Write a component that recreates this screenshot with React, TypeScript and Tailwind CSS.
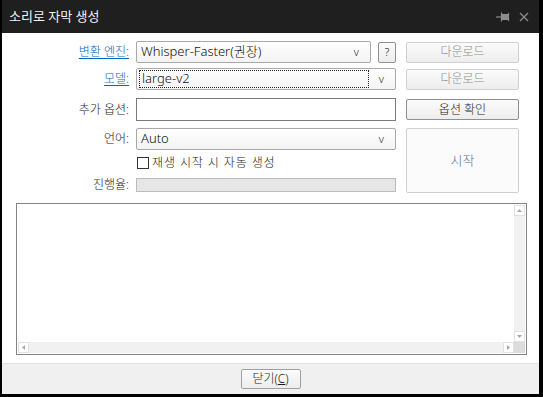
const font = "font-['Noto_Sans','Noto_Sans_CJK_KR',sans-serif] font-light";

function Btn({
  children,
  disabled,
  className = "",
}: {
  children: React.ReactNode;
  disabled?: boolean;
  className?: string;
}) {
  return (
    <button
      className={`flex items-center justify-center rounded-[2px] border bg-gradient-to-b from-[#fbfbfb] to-[#ededed] text-[12px] ${
        disabled
          ? "border-[#d0d0d0] text-[#8d8d8d]"
          : "border-[#8f8f8f] text-[#1a1a1a]"
      } ${className}`}
    >
      {children}
    </button>
  );
}

function Select({
  value,
  focused,
  className = "",
}: {
  value: string;
  focused?: boolean;
  className?: string;
}) {
  return (
    <div
      className={`relative flex h-full items-center rounded-[2px] border border-[#a9a9a9] bg-gradient-to-b from-white to-[#f3f3f3] pr-[11px] text-[13px] text-[#111] ${className}`}
    >
      {focused ? (
        <div className="ml-[2px] flex h-[18px] flex-1 items-center border border-dotted border-[#222] pl-[2px]">
          {value}
        </div>
      ) : (
        <div className="flex-1 pl-[4px]">{value}</div>
      )}
      <span className="ml-[10px] text-[11px] text-[#333]">v</span>
    </div>
  );
}

function Label({ text, link }: { text: string; link?: boolean }) {
  return (
    <div
      className={`w-[128px] pr-[1px] text-right text-[12px] ${
        link ? "text-[#0b63c7] underline underline-offset-2" : "text-[#1a1a1a]"
      }`}
    >
      {text}
    </div>
  );
}

function ArrowBox({ dir }: { dir: "up" | "down" | "left" | "right" }) {
  const pts = {
    up: "2,6 4.5,3 7,6",
    down: "2,3 4.5,6 7,3",
    left: "6,2 3,4.5 6,7",
    right: "3,2 6,4.5 3,7",
  }[dir];
  return (
    <div className="flex h-[11px] w-[11px] items-center justify-center border border-[#e2e2e2] bg-white">
      <svg width="9" height="9" viewBox="0 0 9 9">
        <polygon points={pts} fill="#a8a8a8" />
      </svg>
    </div>
  );
}

export default function App() {
  return (
    <div
      className={`flex h-[397px] w-[543px] flex-col bg-black pb-[3px] pl-[2px] pr-[4px] ${font}`}
    >
      {/* title bar */}
      <div className="flex h-[33px] items-center bg-[#1f1f1f] pl-[7px] pr-[10px]">
        <div className="flex-1 text-[13px] font-normal text-[#f2f2f2]">소리로 자막 생성</div>
        <svg width="14" height="10" viewBox="0 0 14 10" className="mr-[9px]">
          <line x1="0" y1="5" x2="5" y2="5" stroke="#8c8c8c" strokeWidth="1.2" />
          <line x1="5.5" y1="0.5" x2="5.5" y2="9.5" stroke="#8c8c8c" strokeWidth="1.2" />
          <rect x="6" y="2" width="6" height="6" fill="#8c8c8c" />
          <line x1="12.5" y1="1" x2="12.5" y2="9" stroke="#8c8c8c" strokeWidth="1.2" />
        </svg>
        <svg width="10" height="10" viewBox="0 0 10 10">
          <path d="M1 1 L9 9 M9 1 L1 9" stroke="#8c8c8c" strokeWidth="1.3" />
        </svg>
      </div>

      {/* body */}
      <div className="flex flex-1 flex-col bg-white">
        <div className="flex flex-col pt-[8px]">
          <div className="flex h-[22px] items-center">
            <Label text="변환 엔진:" link />
            <div className="ml-[6px] flex h-full w-[260px] items-center">
              <Select value="Whisper-Faster(권장)" className="w-[235px]" />
              <Btn className="ml-[7px] h-[21px] w-[18px] !text-[11px]">?</Btn>
            </div>
            <Btn disabled className="ml-[10px] h-[21px] w-[113px]">
              다운로드
            </Btn>
          </div>

          <div className="mt-[5px] flex h-[22px] items-center">
            <Label text="모델:" link />
            <div className="ml-[6px] h-full w-[260px]">
              <Select value="large-v2" focused />
            </div>
            <Btn disabled className="ml-[10px] h-[21px] w-[113px]">
              다운로드
            </Btn>
          </div>

          <div className="mt-[8px] flex h-[23px] items-center">
            <Label text="추가 옵션:" />
            <div className="ml-[6px] h-full w-[260px] border border-[#7a7a7a] bg-white" />
            <Btn className="ml-[10px] h-[21px] w-[113px]">옵션 확인</Btn>
          </div>

          <div className="mt-[7px] flex">
            <div className="flex flex-col">
              <div className="flex h-[22px] items-center">
                <Label text="언어:" />
                <div className="ml-[6px] h-full w-[260px]">
                  <Select value="Auto" />
                </div>
              </div>
              <div className="mt-[7px] flex h-[12px] items-center pl-[135px]">
                <div className="h-[12px] w-[12px] border border-[#333] bg-white" />
                <span className="ml-[3px] text-[12px] tracking-[0.9px] text-[#1a1a1a]">
                  재생 시작 시 자동 생성
                </span>
              </div>
              <div className="mt-[9px] flex h-[14px] items-center">
                <Label text="진행율:" />
                <div className="ml-[6px] h-full w-[260px] border border-[#bcbcbc] bg-[#e6e6e6]" />
              </div>
            </div>
            <Btn
              disabled
              className="ml-[10px] h-[65px] w-[113px] !bg-none !bg-[#fbfbfb] !text-[13px] !text-[#5d6e8c]"
            >
              시작
            </Btn>
          </div>
        </div>

        {/* log area */}
        <div className="ml-[14px] mt-[10px] flex h-[152px] w-[511px] flex-col border border-[#848484] bg-white p-[1px]">
          <div className="flex flex-1">
            <div className="flex-1" />
            <div className="flex w-[11px] flex-col justify-between bg-[#f1f1f1]">
              <ArrowBox dir="up" />
              <ArrowBox dir="down" />
            </div>
          </div>
          <div className="flex h-[11px]">
            <div className="flex flex-1 justify-between bg-[#f1f1f1]">
              <ArrowBox dir="left" />
              <ArrowBox dir="right" />
            </div>
            <div className="w-[11px] bg-[#dcdcdc]" />
          </div>
        </div>

        {/* footer */}
        <div className="mt-auto flex h-[31px] items-center justify-center border-t border-[#e3e3e3] bg-[#f0f0f0]">
          <Btn className="h-[20px] w-[60px] !border-[#a0a0a0]">
            닫기(<span className="underline">C</span>)
          </Btn>
        </div>
      </div>
    </div>
  );
}
